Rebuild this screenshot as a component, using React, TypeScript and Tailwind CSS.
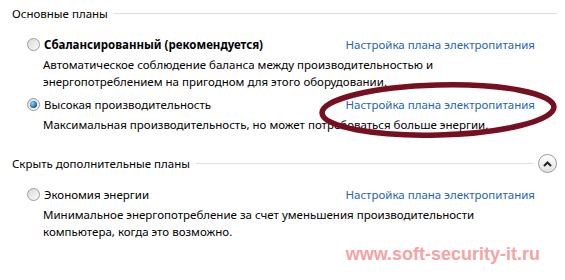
import React from 'react'

function Radio({ checked = false }: { checked?: boolean }) {
  return (
    <span className="flex h-[13px] w-[13px] shrink-0 items-center justify-center rounded-full border border-[#9c9c9c] bg-[linear-gradient(135deg,#d9d9d9,#fafafa)]">
      {checked && (
        <span className="h-[7px] w-[7px] rounded-full bg-[radial-gradient(circle_at_35%_35%,#8ed0f5,#1d5f9e_70%)]" />
      )}
    </span>
  )
}

function Plan({
  title,
  bold = false,
  checked = false,
  lines,
}: {
  title: string
  bold?: boolean
  checked?: boolean
  lines: string[]
}) {
  return (
    <div>
      <div className="flex items-center justify-between pl-[27px] pr-[30px]">
        <label className="flex items-center gap-[4px]">
          <Radio checked={checked} />
          <span className={bold ? 'font-bold' : ''}>{title}</span>
        </label>
        <a className="text-[#1e64b4]">Настройка плана электропитания</a>
      </div>
      <div className="mt-[3px] pl-[43px] leading-[17px]">
        {lines.map((l) => (
          <div key={l}>{l}</div>
        ))}
      </div>
    </div>
  )
}

function Heading({ text, collapse = false }: { text: string; collapse?: boolean }) {
  return (
    <div className="flex items-center pl-[12px] pr-[8px]">
      <span>{text}</span>
      <div className="ml-[6px] h-px flex-1 bg-[#d5dfe5]" />
      {collapse && (
        <button className="ml-[5px] flex h-[19px] w-[19px] items-center justify-center rounded-full border border-[#9a9a9a] bg-[linear-gradient(#ffffff,#e2e2e2)]">
          <svg width="9" height="6" viewBox="0 0 9 6">
            <path d="M1 5 L4.5 1.5 L8 5" fill="none" stroke="#222" strokeWidth="2" />
          </svg>
        </button>
      )}
    </div>
  )
}

export default function App() {
  return (
    <div className="relative h-[280px] w-[565px] overflow-hidden bg-white pt-[5px] font-['Noto_Sans',sans-serif] text-[11.5px] leading-[17px] text-black">
      <Heading text="Основные планы" />
      <div className="mt-[14px]">
        <Plan
          title="Сбалансированный (рекомендуется)"
          bold
          lines={[
            'Автоматическое соблюдение баланса между производительностью и',
            'энергопотреблением на пригодном для этого оборудовании.',
          ]}
        />
      </div>
      <div className="mt-[6px]">
        <Plan
          title="Высокая производительность"
          checked
          lines={['Максимальная производительность, но может потребоваться больше энергии.']}
        />
      </div>
      <div className="mt-[21px]">
        <Heading text="Скрыть дополнительные планы" collapse />
      </div>
      <div className="mt-[13px]">
        <Plan
          title="Экономия энергии"
          lines={[
            'Минимальное энергопотребление за счет уменьшения производительности',
            'компьютера, когда это возможно.',
          ]}
        />
      </div>
      <div className="mt-[6px] pr-[25px] text-right font-['Liberation_Sans',Arial,sans-serif] text-[18px] font-bold text-[#f5a3a3]">
        www.soft-security-it.ru
      </div>

      {/* hand-drawn annotation */}
      <svg className="pointer-events-none absolute left-0 top-0" width="565" height="280">
        <ellipse
          cx="438"
          cy="110"
          rx="116"
          ry="25"
          transform="rotate(-1.5 438 110)"
          fill="none"
          stroke="#760f1f"
          strokeWidth="5.5"
        />
      </svg>
    </div>
  )
}
